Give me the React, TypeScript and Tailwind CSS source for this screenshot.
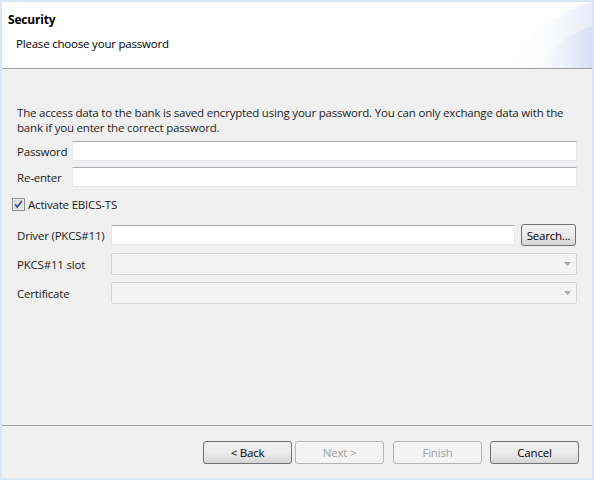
import React from "react";

const font = "font-['Open_Sans','Noto_Sans',sans-serif]";

const HeaderSwoosh = () => (
    <svg className="absolute right-0 top-0 h-[66px] w-[90px]" viewBox="0 0 90 66" preserveAspectRatio="none">
        <defs>
            <linearGradient id="sw1" x1="0" y1="0" x2="1" y2="0">
                <stop offset="0" stopColor="#ffffff" stopOpacity="0" />
                <stop offset="1" stopColor="#e6ecf8" />
            </linearGradient>
            <linearGradient id="sw2" x1="0" y1="0" x2="1" y2="0">
                <stop offset="0" stopColor="#f4f6fc" stopOpacity="0.2" />
                <stop offset="1" stopColor="#d6e0f4" />
            </linearGradient>
        </defs>
        <path d="M4 66 C 20 36, 50 12, 90 0 L 90 66 Z" fill="url(#sw1)" />
        <path d="M38 66 C 48 46, 66 32, 90 24 L 90 66 Z" fill="url(#sw2)" />
    </svg>
);

const Checkbox = () => (
    <svg width="13" height="13" viewBox="0 0 13 13">
        <defs>
            <linearGradient id="cb" x1="0" y1="0" x2="1" y2="1">
                <stop offset="0" stopColor="#dcdcdc" />
                <stop offset="1" stopColor="#f8f8f8" />
            </linearGradient>
        </defs>
        <rect x="0.5" y="0.5" width="12" height="12" fill="#fff" stroke="#8e8f8f" />
        <rect x="2" y="2" width="9" height="9" fill="url(#cb)" stroke="#b8b8b8" strokeWidth="0.5" />
        <path d="M3.2 6.4 L5.3 9 L9.8 3" fill="none" stroke="#3a4f8a" strokeWidth="1.8" />
    </svg>
);

const TextInput = ({ className = "" }: { className?: string }) => (
    <div className={`h-[20px] bg-white border border-[#e3e9ef] border-t-[#abadb3] ${className}`} />
);

const Combo = () => (
    <div className="flex h-[22px] flex-1 items-center justify-end rounded-[2px] border border-[#d5d5d5] bg-[#f4f4f4] pr-[5px]">
        <svg width="7" height="4" viewBox="0 0 7 4">
            <path d="M0 0 L7 0 L3.5 4 Z" fill="#a9a9a9" />
        </svg>
    </div>
);

const Button = ({ label, disabled = false }: { label: string; disabled?: boolean }) => (
    <div
        className={
            disabled
                ? "flex h-[23px] w-[89px] items-center justify-center rounded-[3px] border border-[#b5b5b5] bg-[#f4f4f4] text-[#a0a0a0]"
                : "flex h-[23px] w-[89px] items-center justify-center rounded-[3px] border border-[#707070] bg-gradient-to-b from-[#f2f2f2] via-[#ebebeb] to-[#d6d6d6] text-black"
        }
    >
        {label}
    </div>
);

export default function App() {
    return (
        <div className={`h-[480px] w-[594px] bg-[#dbe6f4] p-[2px] text-[11.5px] leading-[15px] tracking-[-0.2px] text-[#1a1a1a] ${font}`}>
            <div className="flex h-full flex-col bg-[#f0f0f0]">
                {/* Header */}
                <div className="relative h-[67px] shrink-0 overflow-hidden border-b border-[#a0a0a0] bg-white pl-[6px] pt-[10px]">
                    <HeaderSwoosh />
                    <div className="relative text-[12px] font-bold text-black">Security</div>
                    <div className="relative mt-[9px] pl-[8px] text-black">Please choose your password</div>
                </div>

                {/* Body */}
                <div className="flex-1 px-[15px] pt-[36px]">
                    <p className="whitespace-nowrap text-[#1e1e1e]">
                        The access data to the bank is saved encrypted using your password. You can only exchange data with the
                        <br />
                        bank if you enter the correct password.
                    </p>
                    <div className="mt-[6px] flex items-center">
                        <span className="w-[55px] whitespace-nowrap">Password</span>
                        <TextInput className="flex-1" />
                    </div>
                    <div className="mt-[6px] flex items-center">
                        <span className="w-[55px] whitespace-nowrap">Re-enter</span>
                        <TextInput className="flex-1" />
                    </div>
                    <div className="-ml-[5px] mt-[10px] flex items-center gap-[3px]">
                        <Checkbox />
                        <span>Activate EBICS-TS</span>
                    </div>
                    <div className="mt-[12px] flex items-center">
                        <span className="w-[94px] whitespace-nowrap">Driver (PKCS#11)</span>
                        <TextInput className="w-[404px]" />
                        <div className="ml-[6px] flex h-[22px] w-[55px] items-center justify-center rounded-[3px] border border-[#707070] bg-gradient-to-b from-[#f2f2f2] via-[#ebebeb] to-[#d6d6d6] text-black">
                            Search...
                        </div>
                    </div>
                    <div className="mt-[7px] flex items-center">
                        <span className="w-[94px] whitespace-nowrap">PKCS#11 slot</span>
                        <Combo />
                    </div>
                    <div className="mt-[7px] flex items-center">
                        <span className="w-[94px] whitespace-nowrap">Certificate</span>
                        <Combo />
                    </div>
                </div>

                {/* Footer */}
                <div className="flex h-[53px] shrink-0 items-start justify-end border-t border-[#a0a0a0] pr-[13px] pt-[15px]">
                    <Button label="< Back" />
                    <div className="ml-[3px]">
                        <Button label="Next >" disabled />
                    </div>
                    <div className="ml-[9px]">
                        <Button label="Finish" disabled />
                    </div>
                    <div className="ml-[8px]">
                        <Button label="Cancel" />
                    </div>
                </div>
            </div>
        </div>
    );
}
